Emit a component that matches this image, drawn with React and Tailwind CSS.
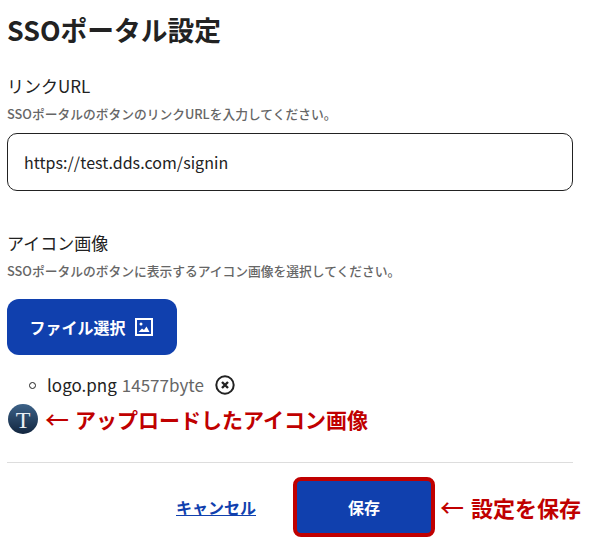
import React from 'react';

const font = { fontFamily: '"Noto Sans CJK JP", sans-serif' };

function ImageIcon() {
    return (
        <svg width="18" height="18" viewBox="0 0 18 18" fill="none">
            <rect x="1" y="1" width="16" height="16" stroke="white" strokeWidth="2" />
            <circle cx="6" cy="6" r="1.5" fill="white" />
            <path d="M3.5 14 L7 10.5 L9 12 L11.5 8.5 L14.5 14 Z" fill="white" />
        </svg>
    );
}

function RemoveIcon() {
    return (
        <svg width="20" height="20" viewBox="0 0 20 20" fill="none">
            <circle cx="10" cy="10" r="8.7" stroke="#222222" strokeWidth="2" />
            <path d="M7 7 L13 13 M13 7 L7 13" stroke="#222222" strokeWidth="2.4" />
        </svg>
    );
}

function LogoIcon() {
    return (
        <svg width="30" height="30" viewBox="0 0 30 30">
            <defs>
                <linearGradient id="logoFill" x1="0" y1="0" x2="0" y2="1">
                    <stop offset="0" stopColor="#3d6288" />
                    <stop offset="1" stopColor="#12263f" />
                </linearGradient>
            </defs>
            <circle cx="15" cy="15" r="15" fill="url(#logoFill)" />
            <text x="15" y="24" textAnchor="middle" fontSize="24" fill="#e8eef4" fontFamily="Liberation Serif">T</text>
        </svg>
    );
}

function Field({ label, help }) {
    return (
        <>
            <p className="text-[17px] leading-[24px] text-[#222222]">{label}</p>
            <p className="mt-[7px] text-[12.75px] leading-[18px] font-medium text-[#666666]">{help}</p>
        </>
    );
}

export default function App() {
    return (
        <div className="w-[590px] h-[540px] overflow-hidden bg-white pl-[7px] pr-[17px]" style={font}>
            <h1 className="pt-[12px] text-[26.75px] leading-[36px] font-bold text-[#222222]">SSOポータル設定</h1>

            <div className="mt-[26px]">
                <Field label="リンクURL" help="SSOポータルのボタンのリンクURLを入力してください。" />
                <div className="mt-[10px] flex h-[58px] items-center rounded-[10px] border border-[#222222] px-[16px] text-[16px] tracking-[0.04px] text-[#222222]">
                    https://test.dds.com/signin
                </div>
            </div>

            <div className="mt-[40px]">
                <Field label="アイコン画像" help="SSOポータルのボタンに表示するアイコン画像を選択してください。" />
                <button className="mt-[19px] flex h-[56px] w-[170px] items-center justify-center gap-[9px] rounded-[12px] bg-[#1040ae] pr-[2px] text-[16px] font-bold text-white">
                    ファイル選択
                    <ImageIcon />
                </button>
            </div>

            <div className="mt-[18px] flex h-[24px] items-center pl-[22px] text-[17px]">
                <span className="h-[7px] w-[7px] rounded-full border border-[#222222]" />
                <span className="ml-[11px] text-[#222222]">logo.png</span>
                <span className="ml-[5px] text-[#666666]">14577byte</span>
                <span className="ml-[11px]"><RemoveIcon /></span>
            </div>

            <div className="mt-[7px] flex items-center pl-px">
                <LogoIcon />
                <span className="ml-[7px] text-[24px] leading-[30px] font-medium text-[#c00000]">←</span>
                <span className="ml-[6px] text-[21px] leading-[30px] font-bold text-[#c00000]">アップロードしたアイコン画像</span>
            </div>

            <div className="mt-[28px] h-px w-[566px] bg-[#dddddd]" />

            <div className="mt-[14px] flex w-[590px] items-center">
                <a className="ml-[169px] shrink-0 text-[16px] font-bold whitespace-nowrap text-[#1040ae] underline">キャンセル</a>
                <button className="ml-[37px] h-[60px] w-[142px] shrink-0 rounded-[8px] border-[4px] border-[#c00000] bg-[#1040ae] text-[16px] font-bold text-white">保存</button>
                <span className="ml-[5px] text-[24px] leading-[30px] font-medium text-[#c00000]">←</span>
                <span className="ml-[7px] text-[22px] leading-[30px] font-bold whitespace-nowrap text-[#c00000]">設定を保存</span>
            </div>
        </div>
    );
}
